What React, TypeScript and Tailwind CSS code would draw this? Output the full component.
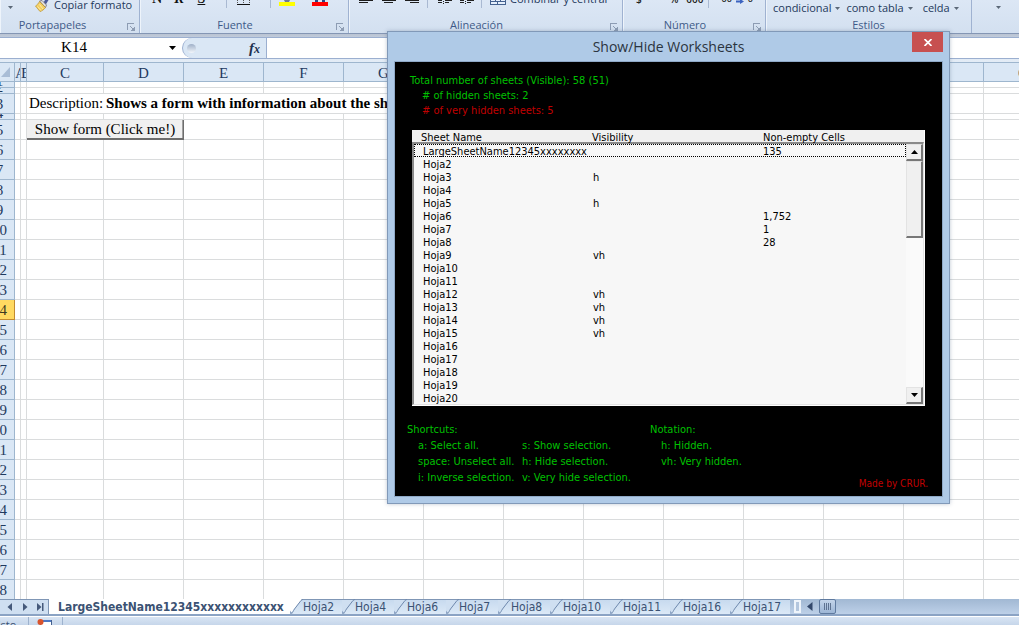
import React from 'react';

const ribbonFont = "font-['Open_Sans','Noto_Sans',sans-serif]";
const formFont = "font-['DejaVu_Sans_Condensed','DejaVu_Sans',sans-serif]";
const serifFont = "font-['Liberation_Serif',serif]";

type Sheet = { name: string; visibility?: string; cells?: string };

const sheets: Sheet[] = [
  { name: 'LargeSheetName12345xxxxxxxx', cells: '135' },
  { name: 'Hoja2' },
  { name: 'Hoja3', visibility: 'h' },
  { name: 'Hoja4' },
  { name: 'Hoja5', visibility: 'h' },
  { name: 'Hoja6', cells: '1,752' },
  { name: 'Hoja7', cells: '1' },
  { name: 'Hoja8', cells: '28' },
  { name: 'Hoja9', visibility: 'vh' },
  { name: 'Hoja10' },
  { name: 'Hoja11' },
  { name: 'Hoja12', visibility: 'vh' },
  { name: 'Hoja13', visibility: 'vh' },
  { name: 'Hoja14', visibility: 'vh' },
  { name: 'Hoja15', visibility: 'vh' },
  { name: 'Hoja16' },
  { name: 'Hoja17' },
  { name: 'Hoja18' },
  { name: 'Hoja19' },
  { name: 'Hoja20' },
];

const columns = ['A', 'B', 'C', 'D', 'E', 'F', 'G', 'H', 'I', 'J', 'K', 'L', 'M', 'N', 'O'];
const rows = Array.from({ length: 28 }, (_, i) => i + 1);
const thinRows = [1, 2, 4];
const tabs = ['Hoja2', 'Hoja4', 'Hoja6', 'Hoja7', 'Hoja8', 'Hoja10', 'Hoja11', 'Hoja16', 'Hoja17'];

function Launcher({ label }: { label: string }) {
  return (
    <button type="button" aria-label={label} className="mr-1 h-4 shrink-0 pt-[3px]">
      <svg width="8" height="8" viewBox="0 0 8 8" shapeRendering="crispEdges" className="block">
        <path d="M0.5 7V0.5H7" stroke="#8d9cb3" fill="none" />
        <path d="M3 3l3 3" stroke="#8d9cb3" fill="none" />
        <path d="M4 7.5h3.5V4M5 6.5h1.5V5" stroke="#8d9cb3" fill="none" />
      </svg>
    </button>
  );
}

function Caret() {
  return (
    <svg width="5" height="3" viewBox="0 0 5 3" className="shrink-0">
      <path d="M0 0h5L2.5 3z" fill="#5b6878" />
    </svg>
  );
}

function Group({
  title,
  width,
  titlePad = '',
  launcher = true,
  children,
}: {
  title: string;
  width: string;
  titlePad?: string;
  launcher?: boolean;
  children: React.ReactNode;
}) {
  return (
    <section
      className={`flex h-full shrink-0 flex-col overflow-hidden border-r border-[#9fb2d1] shadow-[inset_1px_0_0_#eef4fb] ${width}`}
    >
      <div className="flex h-[17px] items-start">{children}</div>
      <div className="flex h-4 items-center">
        <h2 className={`flex-1 text-center text-[11px] leading-4 text-[#3e5a88] ${titlePad}`}>{title}</h2>
        {launcher && <Launcher label={`${title}: opciones`} />}
      </div>
    </section>
  );
}

function Divider({ className = '' }: { className?: string }) {
  return <span className={`h-2 w-px shrink-0 bg-[#a9b9d2] ${className}`} />;
}

function AlignIcon({ kind, className = '' }: { kind: 'left' | 'center' | 'right'; className?: string }) {
  const x = kind === 'left' ? 0 : kind === 'center' ? 2 : 5;
  return (
    <svg width="14" height="4" viewBox="0 0 14 4" className={`shrink-0 ${className}`} shapeRendering="crispEdges">
      <rect x="0" y="0" width="14" height="1" fill="#1d1d1d" />
      <rect x={x} y="2" width="9" height="1" fill="#1d1d1d" />
    </svg>
  );
}

function IndentIcon({ className = '' }: { className?: string }) {
  return (
    <svg width="14" height="5" viewBox="0 0 14 5" className={`shrink-0 ${className}`} shapeRendering="crispEdges">
      <rect x="0" y="0" width="4" height="1" fill="#222" />
      <rect x="7" y="0" width="7" height="1" fill="#222" />
      <rect x="0" y="2" width="4" height="1" fill="#222" />
      <rect x="7" y="2" width="4" height="1" fill="#222" />
      <rect x="5" y="1" width="1" height="1" fill="#222" />
      <rect x="5" y="3" width="1" height="1" fill="#222" />
    </svg>
  );
}

function Ribbon() {
  return (
    <header
      className={`flex h-[34px] shrink-0 overflow-hidden border-b border-[#8496b4] bg-linear-to-b from-[#dce7f5] to-[#d3e0f0] text-[11px] text-[#1e395b] ${ribbonFont}`}
    >
      <Group title="Portapapeles" width="w-[140px]" titlePad="pr-[22px]">
        <span className="ml-2 pt-[6px]">
          <Caret />
        </span>
        <button type="button" className="ml-[22px] flex items-start gap-1">
          <svg width="15" height="12" viewBox="0 0 15 12" className="shrink-0">
            <path d="M10 0L13.5 0L10.5 5L8 3.5z" fill="#4b5a9a" />
            <path d="M4.500 1L7 0.500L11.500 5L10.500 7.500z" fill="#e9e6df" stroke="#6e6a76" strokeWidth="0.8" />
            <path d="M4.500 1.500L10.500 7.500C9 9.500 7 11 5 11.500L0.500 6C2 5 3.500 3.500 4.500 1.500z" fill="#f3cf62" stroke="#b98f2c" strokeWidth="0.7" />
            <path d="M2.500 6.500L6 10.500M4.500 4.500L8 9" stroke="#fff3b8" strokeWidth="0.8" />
          </svg>
          <span className="-mt-[2px] whitespace-nowrap leading-[14px]">Copiar formato</span>
        </button>
      </Group>
      <Group title="Fuente" width="w-[209px]" titlePad="pr-[6px]">
        <div className="flex h-[6px] items-end font-['Liberation_Serif',serif] text-sm leading-[14px] font-bold text-[#111]">
          <button type="button" className="ml-3 h-[14px]">N</button>
          <button type="button" className="ml-3 h-[14px] italic">K</button>
          <button type="button" className="ml-[14px] h-[14px] underline">S</button>
        </div>
        <Divider className="ml-[21px]" />
        <svg width="13" height="6" viewBox="0 0 13 6" className="ml-[10px] shrink-0" shapeRendering="crispEdges">
          <path d="M0.500 0V4M12.500 0V4M6.500 0V4" stroke="#555" strokeDasharray="1 1" />
          <path d="M0 4.500H13" stroke="#111" />
        </svg>
        <Divider className="ml-[20px]" />
        <svg width="16" height="6" viewBox="0 0 16 6" className="ml-2 shrink-0">
          <path d="M5 0h6l-1 2h-4z" fill="#6e7b91" />
          <rect y="2" width="16" height="4" fill="#ffff00" />
        </svg>
        <svg width="16" height="6" viewBox="0 0 16 6" className="ml-[17px] shrink-0">
          <path d="M3 0h3v2H3zM10 0h3v2h-3z" fill="#2b4a86" />
          <rect y="2" width="16" height="4" fill="#ff0000" />
        </svg>
      </Group>
      <Group title="Alineación" width="w-[274px]" titlePad="pr-[6px]">
        <AlignIcon kind="left" className="ml-[10px]" />
        <AlignIcon kind="center" className="ml-[9px]" />
        <AlignIcon kind="right" className="ml-[9px]" />
        <Divider className="ml-2" />
        <IndentIcon className="ml-[10px]" />
        <IndentIcon className="ml-2" />
        <Divider className="ml-[7px]" />
        <button type="button" className="ml-2 flex items-start gap-1">
          <svg width="16" height="5" viewBox="0 0 16 5" className="shrink-0" shapeRendering="crispEdges">
            <rect width="16" height="5" fill="#44618f" />
            <path d="M1 0h4v1H1zM6 0h4v1H6zM11 0h4v1h-4zM1 2h6v2H1zM8 2h7v2H8z" fill="#e4eefb" />
          </svg>
          <span className="-mt-2 leading-[14px] whitespace-nowrap">Combinar y centrar</span>
        </button>
      </Group>
      <Group title="Número" width="w-[143px]" titlePad="pr-[6px]">
        <div className="-mt-2 flex text-[10px] leading-[14px] font-semibold text-[#222]">
          <span className="ml-[13px]">$</span>
          <span className="ml-7">%</span>
          <span className="ml-2">000</span>
        </div>
        <Divider className="ml-1" />
        <span className="-mt-2 ml-[13px] text-[9px] leading-[14px] font-semibold text-[#222]">00</span>
        <svg width="8" height="5" viewBox="0 0 8 5" className="ml-1 shrink-0">
          <path d="M0 0.500h4V-1L8 1.500L4 4V2.500H0z" fill="#3b63c0" />
        </svg>
        <span className="-mt-2 ml-1 text-[9px] leading-[14px] font-semibold text-[#222]">0</span>
      </Group>
      <Group title="Estilos" width="w-[206px]" launcher={false}>
        <div className="flex gap-[6px] pl-[7px] leading-4">
          <button type="button" className="flex items-center gap-1">condicional <Caret /></button>
          <button type="button" className="flex items-center gap-1 whitespace-nowrap">como tabla <Caret /></button>
          <button type="button" className="ml-1 flex items-center gap-1">celda <Caret /></button>
        </div>
      </Group>
      <section className="flex flex-1 pt-[6px] pl-6">
        <Caret />
      </section>
    </header>
  );
}

function FormulaBar() {
  return (
    <div className="h-7 shrink-0 bg-linear-to-b from-[#b9c3d3] via-[#dfe7f1] to-[#e3ecf6] pt-[3px]">
      <div className="flex h-[22px] border-y border-[#9bafd0] bg-white">
        <div className="flex w-[182px] shrink-0 items-center">
          <input
            aria-label="Cuadro de nombres"
            defaultValue="K14"
            className={`h-5 w-[148px] bg-white pb-[2px] text-center text-[15px] leading-[18px] text-black outline-none ${serifFont}`}
          />
          <button type="button" aria-label="Lista de nombres" className="ml-[21px]">
            <svg width="7" height="4" viewBox="0 0 7 4">
              <path d="M0 0h7L3.500 4z" fill="#000" />
            </svg>
          </button>
        </div>
        <div className="flex w-[85px] shrink-0 items-center rounded-l-full border-r border-l border-[#9bafd0] bg-[#dae7f5] pl-1">
          <span className="size-[9px] rounded-full bg-linear-to-b from-[#9fb0c8] to-[#f2f6fb]" />
          <button
            type="button"
            aria-label="Insertar función"
            className="mr-[6px] ml-auto font-['Liberation_Serif',serif] text-[15px] leading-[18px] font-bold text-[#1e3250] italic"
          >
            f<span className="text-xs">x</span>
          </button>
        </div>
        <input aria-label="Barra de fórmulas" className="min-w-0 flex-1 bg-white outline-none" />
      </div>
    </div>
  );
}

function Row({ n }: { n: number }) {
  const thin = thinRows.includes(n);
  const active = n === 14;
  const height = thin ? 'h-[6px]' : 'h-5';
  const cell = 'border-r border-b border-[#dadcdd] p-0';
  return (
    <tr className={height}>
      <th
        scope="row"
        className={`border-r border-b p-0 text-[15px] font-normal ${
          active ? 'border-[#c28a30] bg-[#ffd961] text-[#3d3a20]' : 'border-[#9eb6ce] bg-[#dae7f5] text-[#1f3a5f]'
        }`}
      >
        <div
          className={`flex justify-center overflow-hidden ${
            thin ? 'h-[5px] items-end leading-[11px]' : 'h-[19px] items-center leading-4'
          }`}
        >
          {n}
        </div>
      </th>
      {n === 3 && (
        <>
          <td className={cell} />
          <td className={cell} />
          <td className="border-b border-[#dadcdd] p-0 pl-[2px] text-[15px] leading-[19px] whitespace-nowrap">Description:</td>
          <td colSpan={5} className="border-r border-b border-[#dadcdd] p-0 pl-[2px] text-[15px] leading-[19px] font-bold whitespace-nowrap">
            Shows a form with information about the sheets.
          </td>
          {columns.slice(8).map((c) => (
            <td key={c} className={cell} />
          ))}
        </>
      )}
      {n === 5 && (
        <>
          <td className={cell} />
          <td className={cell} />
          <td colSpan={2} className="p-0">
            <button
              type="button"
              className="block h-5 w-full border-r border-b-2 border-[#6d6d6d] bg-[#f0f0f0] text-center text-[15px] leading-[18px] text-black shadow-[inset_-1px_0_0_#a0a0a0]"
            >
              Show form (Click me!)
            </button>
          </td>
          {columns.slice(4).map((c) => (
            <td key={c} className={cell} />
          ))}
        </>
      )}
      {n !== 3 && n !== 5 && columns.map((c) => <td key={c} className={cell} />)}
    </tr>
  );
}

function Grid() {
  return (
    <main className="min-h-0 flex-1 overflow-hidden bg-white">
      <table className={`-ml-[15px] w-[1079px] table-fixed border-separate border-spacing-0 text-black ${serifFont}`}>
        <colgroup>
          <col className="w-[30px]" />
          {columns.map((c) => (
            <col key={c} className={c < 'C' ? 'w-[6px]' : c === 'C' ? 'w-[77px]' : 'w-[80px]'} />
          ))}
        </colgroup>
        <thead>
          <tr className="h-5">
            <th className="border-t border-r border-b border-[#9eb6ce] bg-[#dae7f5] p-0">
              <svg width="9" height="10" viewBox="0 0 9 10" className="mr-[4px] ml-auto">
                <path d="M9 0V10H0z" fill="#a9bdd6" />
              </svg>
            </th>
            {columns.map((c) => (
              <th
                key={c}
                scope="col"
                className={`border-t border-r border-b p-0 text-[15px] leading-[18px] font-normal ${
                  c === 'K' ? 'border-[#c28a30] bg-[#ffd961]' : 'border-[#9eb6ce] bg-[#dae7f5]'
                } text-[#1f3a5f]`}
              >
                <div className={`flex h-[18px] overflow-hidden pt-px ${c < 'C' ? 'justify-start' : 'justify-center'}`}>{c}</div>
              </th>
            ))}
          </tr>
        </thead>
        <tbody>
          {rows.map((n) => (
            <Row key={n} n={n} />
          ))}
        </tbody>
      </table>
    </main>
  );
}

function NavArrow({ label, d }: { label: string; d: string }) {
  return (
    <button type="button" aria-label={label}>
      <svg width="7" height="8" viewBox="0 0 7 8">
        <path d={d} fill="#45597a" />
      </svg>
    </button>
  );
}

function TabBar() {
  return (
    <nav className="flex h-[17px] shrink-0 overflow-hidden border-b-2 border-[#8ba3c4] bg-[#c5d7ec]">
      <div className="flex w-[49px] shrink-0 items-center gap-2 border-t border-r border-[#7f96b5] bg-[#cfdff1] pl-[7px]">
        <NavArrow label="Hoja anterior" d="M5 0V8L0.500 4z" />
        <NavArrow label="Hoja siguiente" d="M1 0V8L5.500 4z" />
        <NavArrow label="Última hoja" d="M0 0V8L4.500 4zM5 0h1.500v8H5z" />
      </div>
      <button type="button" className={`w-[241px] shrink-0 bg-white pl-[9px] text-left text-xs leading-4 font-bold whitespace-nowrap text-[#3b5273] ${formFont}`}>
        LargeSheetName12345xxxxxxxxxxxx
      </button>
      {tabs.map((t, i) => (
        <button
          key={t}
          type="button"
          className={`flex shrink-0 bg-linear-to-b from-[#c6d9ee] to-[#dce9f7] text-left text-xs leading-4 text-[#3b5273] shadow-[inset_0_1px_0_#7f96b5] ${formFont} ${
            t.length > 5 ? 'w-[60px]' : 'w-[52px]'
          }`}
        >
          <svg width="13" height="15" viewBox="0 0 13 15" className="shrink-0">
            <path d="M0 0H12L0 15z" fill={i === 0 ? '#ffffff' : '#cfdff1'} />
            {i > 0 && <path d="M0 0.500H12" stroke="#7f96b5" />}
            <path d="M0.500 14.500C3 14 3 12 4.500 10L11 1.500Q12 0.500 13 0.500" fill="none" stroke="#6f89ad" />
            <path d="M0 11.500Q1 14 3.500 14.500H0z" fill="#8ba3c4" />
          </svg>
          {t}
        </button>
      ))}
      <div className="flex min-w-0 flex-1 bg-linear-to-b from-[#a1b8d3] to-[#bdd0e8]">
        <span className="my-px ml-1 w-[7px] shrink-0 border-2 border-[#eef4fb] bg-[#b3c6de]" />
        <button type="button" aria-label="Desplazar a la izquierda" className="ml-[6px] shrink-0">
          <svg width="6" height="9" viewBox="0 0 6 9">
            <path d="M5.500 0V9L0 4.500z" fill="#34496c" />
          </svg>
        </button>
        <span className="ml-[6px] flex w-[17px] shrink-0 items-center justify-center gap-px rounded-xs border border-[#5f7a9f] bg-linear-to-b from-[#c3d4e9] to-[#9db6d6]">
          {[0, 1, 2, 3].map((i) => (
            <i key={i} className="h-[7px] w-px bg-[#5f7391]" />
          ))}
        </span>
      </div>
    </nav>
  );
}

function StatusBar() {
  return (
    <footer className={`flex h-[9px] shrink-0 overflow-hidden border-t border-white bg-linear-to-b from-[#d9e5f4] to-[#c6d6ea] text-[11px] leading-4 text-[#3b5273] ${ribbonFont}`}>
      <span className="flex w-7 shrink-0 justify-start">
        <span className="-ml-2">Listo</span>
      </span>
      <span className="h-full w-px bg-[#9db2ce]" />
      <svg width="16" height="8" viewBox="0 0 16 8" className="ml-2 shrink-0">
        <rect x="3.500" y="3.500" width="11" height="8" fill="#fff" stroke="#44618f" />
        <rect x="4" y="3" width="10" height="2" fill="#4d78c4" />
        <circle cx="3.500" cy="5" r="3" fill="#d9532c" />
      </svg>
      <span className="ml-[9px] h-full w-px bg-[#9db2ce]" />
    </footer>
  );
}

const bevel =
  'border-t border-l border-r-2 border-b-2 border-t-[#e3e3e3] border-l-[#e3e3e3] border-r-[#777] border-b-[#777] bg-[#f0f0f0]';

function SheetList() {
  return (
    <div className="mr-[17px] ml-[17px] bg-white pr-px pb-px text-black">
      <div className="flex h-3 bg-[#f0f0f0] pl-[9px] text-[11px] leading-4">
        <span className="w-[171px]">Sheet Name</span>
        <span className="w-[171px]">Visibility</span>
        <span>Non-empty Cells</span>
      </div>
      <div className="flex border-t-2 border-r border-b border-l-2 border-t-[#8a8a8a] border-r-[#e3e3e3] border-b-[#e3e3e3] border-l-[#8a8a8a] bg-[#f7f7f7]">
        <table className="min-w-0 flex-1 table-fixed border-separate border-spacing-0 text-[11px]">
          <tbody className="block w-full">
            {sheets.map((s, i) => (
              <tr
                key={s.name}
                className={`flex h-[13px] w-full pl-[9px] leading-4 ${i === 0 ? 'outline-1 -outline-offset-1 outline-dotted outline-black' : ''}`}
              >
                <td className="w-[170px] p-0 whitespace-nowrap">{s.name}</td>
                <td className="w-[170px] p-0">{s.visibility}</td>
                <td className="p-0">{s.cells}</td>
              </tr>
            ))}
          </tbody>
        </table>
        <div className="flex w-[17px] shrink-0 flex-col bg-[#fafafa]">
          <button type="button" aria-label="Scroll up" className={`flex h-[17px] items-center justify-center ${bevel}`}>
            <svg width="7" height="4" viewBox="0 0 7 4">
              <path d="M0 4h7L3.500 0z" fill="#000" />
            </svg>
          </button>
          <span className={`h-[77px] ${bevel}`} />
          <button type="button" aria-label="Scroll down" className={`mt-auto flex h-[17px] items-center justify-center ${bevel}`}>
            <svg width="7" height="4" viewBox="0 0 7 4">
              <path d="M0 0h7L3.500 4z" fill="#000" />
            </svg>
          </button>
        </div>
      </div>
    </div>
  );
}

function WorksheetsForm() {
  return (
    <div
      role="dialog"
      aria-labelledby="form-title"
      className="absolute top-[31px] left-[387px] w-[563px] border border-[#8199b8] bg-[#afcae7] px-[6px] pb-[6px] shadow-[0_0_4px_rgba(90,110,140,0.4)]"
    >
      <div className="relative flex h-[29px] justify-center">
        <h1 id="form-title" className={`text-sm leading-[30px] text-[#2b3440] ${ribbonFont}`}>
          Show/Hide Worksheets
        </h1>
        <button
          type="button"
          aria-label="Close"
          className="absolute top-0 right-0 flex h-5 w-[31px] items-center justify-center bg-[#c75050]"
        >
          <svg width="8" height="7" viewBox="0 0 8 7">
            <path d="M0.500 0L7.500 7M7.500 0L0.500 7" stroke="#fff" strokeWidth="1.700" />
          </svg>
        </button>
      </div>
      <div className={`border border-[#8fa9c7] bg-black text-[11px] text-[#00c000] ${formFont}`}>
        <div className="pt-[11px] pl-[15px] leading-[15px]">
          <p>Total number of sheets (Visible): 58 (51)</p>
          <p className="pl-3"># of hidden sheets: 2</p>
          <p className="pl-3 text-[#c00000]"># of very hidden sheets: 5</p>
        </div>
        <div className="pt-3">
          <SheetList />
        </div>
        <div className="flex pt-4 pb-1 pl-3 leading-4">
          <div className="w-[243px]">
            <h2>Shortcuts:</h2>
            <div className="flex pl-[11px] whitespace-nowrap">
              <ul className="w-[104px]">
                <li>a: Select all.</li>
                <li>space: Unselect all.</li>
                <li>i: Inverse selection.</li>
              </ul>
              <ul>
                <li>s: Show selection.</li>
                <li>h: Hide selection.</li>
                <li>v: Very hide selection.</li>
              </ul>
            </div>
          </div>
          <div>
            <h2>Notation:</h2>
            <ul className="pl-[11px]">
              <li>h: Hidden.</li>
              <li>vh: Very hidden.</li>
            </ul>
          </div>
          <p className="mr-[14px] ml-auto pt-[54px] text-[10px] text-[#c00000]">Made by CRUR.</p>
        </div>
      </div>
    </div>
  );
}

export default function App() {
  return (
    <div className="relative flex h-screen flex-col overflow-hidden bg-white">
      <Ribbon />
      <FormulaBar />
      <Grid />
      <TabBar />
      <StatusBar />
      <WorksheetsForm />
    </div>
  );
}
